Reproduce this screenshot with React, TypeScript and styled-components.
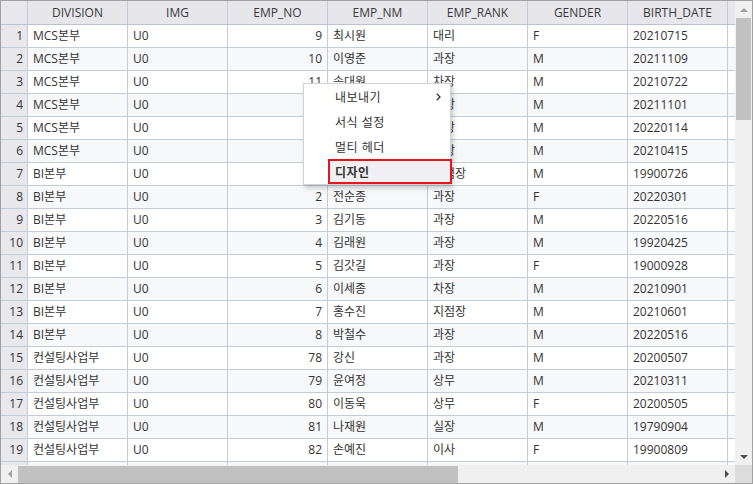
import React from 'react';
import styled, { createGlobalStyle } from 'styled-components';

const GlobalStyle = createGlobalStyle`
  html, body {
    margin: 0;
    padding: 0;
    background: #ffffff;
  }
  body {
    font-family: "Segoe UI", "Open Sans", "Noto Sans CJK KR", sans-serif;
    font-size: 12px;
    color: #333333;
  }
`;

const LINE = '#c4ccd8';

type Row = [string, string, string, string, string, string, string];

// rows 4-7: EMP_NO / EMP_NM sit under the context menu
const rows: Row[] = [
  ['MCS본부', 'U0', '9', '최시원', '대리', 'F', '20210715'],
  ['MCS본부', 'U0', '10', '이영준', '과장', 'M', '20211109'],
  ['MCS본부', 'U0', '11', '송대원', '차장', 'M', '20210722'],
  ['MCS본부', 'U0', '', '', '과장', 'M', '20211101'],
  ['MCS본부', 'U0', '', '', '과장', 'M', '20220114'],
  ['MCS본부', 'U0', '', '', '과장', 'M', '20210415'],
  ['BI본부', 'U0', '', '', '지점장', 'M', '19900726'],
  ['BI본부', 'U0', '2', '전순종', '과장', 'F', '20220301'],
  ['BI본부', 'U0', '3', '김기동', '과장', 'M', '20220516'],
  ['BI본부', 'U0', '4', '김래원', '과장', 'M', '19920425'],
  ['BI본부', 'U0', '5', '김갓길', '과장', 'F', '19000928'],
  ['BI본부', 'U0', '6', '이세종', '차장', 'M', '20210901'],
  ['BI본부', 'U0', '7', '홍수진', '지점장', 'M', '20210601'],
  ['BI본부', 'U0', '8', '박철수', '과장', 'M', '20220516'],
  ['컨설팅사업부', 'U0', '78', '강신', '과장', 'M', '20200507'],
  ['컨설팅사업부', 'U0', '79', '윤여정', '상무', 'M', '20210311'],
  ['컨설팅사업부', 'U0', '80', '이동욱', '상무', 'F', '20200505'],
  ['컨설팅사업부', 'U0', '81', '나재원', '실장', 'M', '19790904'],
  ['컨설팅사업부', 'U0', '82', '손예진', '이사', 'F', '19900809'],
];

const columns = ['DIVISION', 'IMG', 'EMP_NO', 'EMP_NM', 'EMP_RANK', 'GENDER', 'BIRTH_DATE', ''];

const Frame = styled.div`
  position: relative;
  width: 753px;
  height: 484px;
  box-sizing: border-box;
  border: 1px solid #a0a0a0;
  display: flex;
  flex-direction: column;
  overflow: hidden;
  background: #ffffff;
`;

const Main = styled.div`
  display: flex;
  flex: 1;
  min-height: 0;
`;

const Body = styled.div`
  width: 734px;
  overflow: hidden;
`;

const HeaderRow = styled.div`
  display: flex;
  height: 24px;
  box-sizing: border-box;
  background: #e6e6eb;
  border-bottom: 1px solid #b9c3d1;
`;

const DataRow = styled.div<{ $alt: boolean }>`
  display: flex;
  height: 23px;
  box-sizing: border-box;
  border-bottom: 1px solid ${LINE};
  background: ${({ $alt }) => ($alt ? '#f7f8fa' : '#ffffff')};
`;

const Cell = styled.div<{ $w: number; $align?: 'left' | 'right' | 'center' }>`
  flex: 0 0 ${({ $w }) => $w}px;
  box-sizing: border-box;
  border-right: 1px solid ${LINE};
  padding: 0 5px;
  display: flex;
  align-items: center;
  justify-content: ${({ $align }) =>
    $align === 'right' ? 'flex-end' : $align === 'center' ? 'center' : 'flex-start'};
  white-space: nowrap;
  overflow: hidden;
  line-height: 1;
`;

const NumCell = styled(Cell)`
  background: #e8e8ec;
  padding: 0 4px 0 0;
`;

const HeadCell = styled(Cell)`
  color: #3a3a3a;
`;

const VScroll = styled.div`
  width: 17px;
  background: #f0f0f0;
  display: flex;
  flex-direction: column;
  align-items: center;
`;

const VThumb = styled.div`
  width: 15px;
  height: 102px;
  background: #c1c1c1;
`;

const Arrow = styled.div<{ $dir: 'up' | 'down' | 'left' | 'right' }>`
  width: 17px;
  height: 17px;
  flex: 0 0 17px;
  display: flex;
  align-items: center;
  justify-content: center;
  &::after {
    content: '';
    width: 0;
    height: 0;
    border: 4px solid transparent;
    ${({ $dir }) =>
      $dir === 'up'
        ? 'border-bottom-color: #a3a3a3; border-top-width: 0;'
        : $dir === 'down'
        ? 'border-top-color: #505050; border-bottom-width: 0;'
        : $dir === 'left'
        ? 'border-right-color: #a3a3a3; border-left-width: 0;'
        : 'border-left-color: #505050; border-right-width: 0;'}
  }
`;

const Spacer = styled.div`
  flex: 1;
`;

const HScroll = styled.div`
  height: 18px;
  display: flex;
  background: #f0f0f0;
  align-items: center;
`;

const HThumb = styled.div`
  width: 440px;
  height: 17px;
  background: #c1c1c1;
`;

const Corner = styled.div`
  width: 17px;
  height: 18px;
  background: #dcdcdc;
`;

const Menu = styled.div`
  position: absolute;
  left: 302px;
  top: 82px;
  width: 146px;
  background: #ffffff;
  border: 1px solid #d2d2d2;
  box-shadow: 2px 3px 5px rgba(0, 0, 0, 0.2);
`;

const MenuItem = styled.div<{ $active?: boolean }>`
  position: relative;
  height: 25px;
  display: flex;
  align-items: center;
  margin-left: 24px;
  padding-left: 7px;
  box-sizing: border-box;
  font-weight: ${({ $active }) => ($active ? 700 : 400)};
  background: ${({ $active }) => ($active ? '#f0f0f4' : 'transparent')};
  outline: ${({ $active }) => ($active ? '2px solid #e8141b' : 'none')};
  outline-offset: -2px;
  margin-right: ${({ $active }) => ($active ? '-2px' : '0')};
  color: #333333;
  letter-spacing: 0.5px;
`;

const Chevron = styled.svg`
  position: absolute;
  right: 9px;
  top: 9px;
`;

const widthOf = (i: number) => (i === columns.length - 1 ? 8 : 100);
const alignOf = (i: number): 'left' | 'right' => (i === 2 ? 'right' : 'left');

export default function App() {
  return (
    <>
      <GlobalStyle />
      <Frame>
        <Main>
          <Body>
            <HeaderRow>
              <NumCell $w={27} />
              {columns.map((c, i) => (
                <HeadCell key={i} $w={widthOf(i)} $align="center">
                  {c}
                </HeadCell>
              ))}
            </HeaderRow>
            {rows.map((r, ri) => (
              <DataRow key={ri} $alt={ri % 2 === 1}>
                <NumCell $w={27} $align="right">
                  {ri + 1}
                </NumCell>
                {r.map((v, ci) => (
                  <Cell key={ci} $w={widthOf(ci)} $align={alignOf(ci)}>
                    {v}
                  </Cell>
                ))}
                <Cell $w={8} />
              </DataRow>
            ))}
            <DataRow $alt>
              <NumCell $w={27} />
              {columns.map((_, ci) => (
                <Cell key={ci} $w={widthOf(ci)} />
              ))}
            </DataRow>
          </Body>
          <VScroll>
            <Arrow $dir="up" />
            <VThumb />
            <Spacer />
            <Arrow $dir="down" />
          </VScroll>
        </Main>
        <HScroll>
          <Arrow $dir="left" />
          <HThumb />
          <Spacer />
          <Arrow $dir="right" />
          <Corner />
        </HScroll>
        <Menu>
          <MenuItem>
            내보내기
            <Chevron width="5" height="8" viewBox="0 0 5 8">
              <path d="M0.8 0.8 L4 4 L0.8 7.2" fill="none" stroke="#333" strokeWidth="1.3" />
            </Chevron>
          </MenuItem>
          <MenuItem>서식 설정</MenuItem>
          <MenuItem>멀티 헤더</MenuItem>
          <MenuItem $active>디자인</MenuItem>
        </Menu>
      </Frame>
    </>
  );
}
